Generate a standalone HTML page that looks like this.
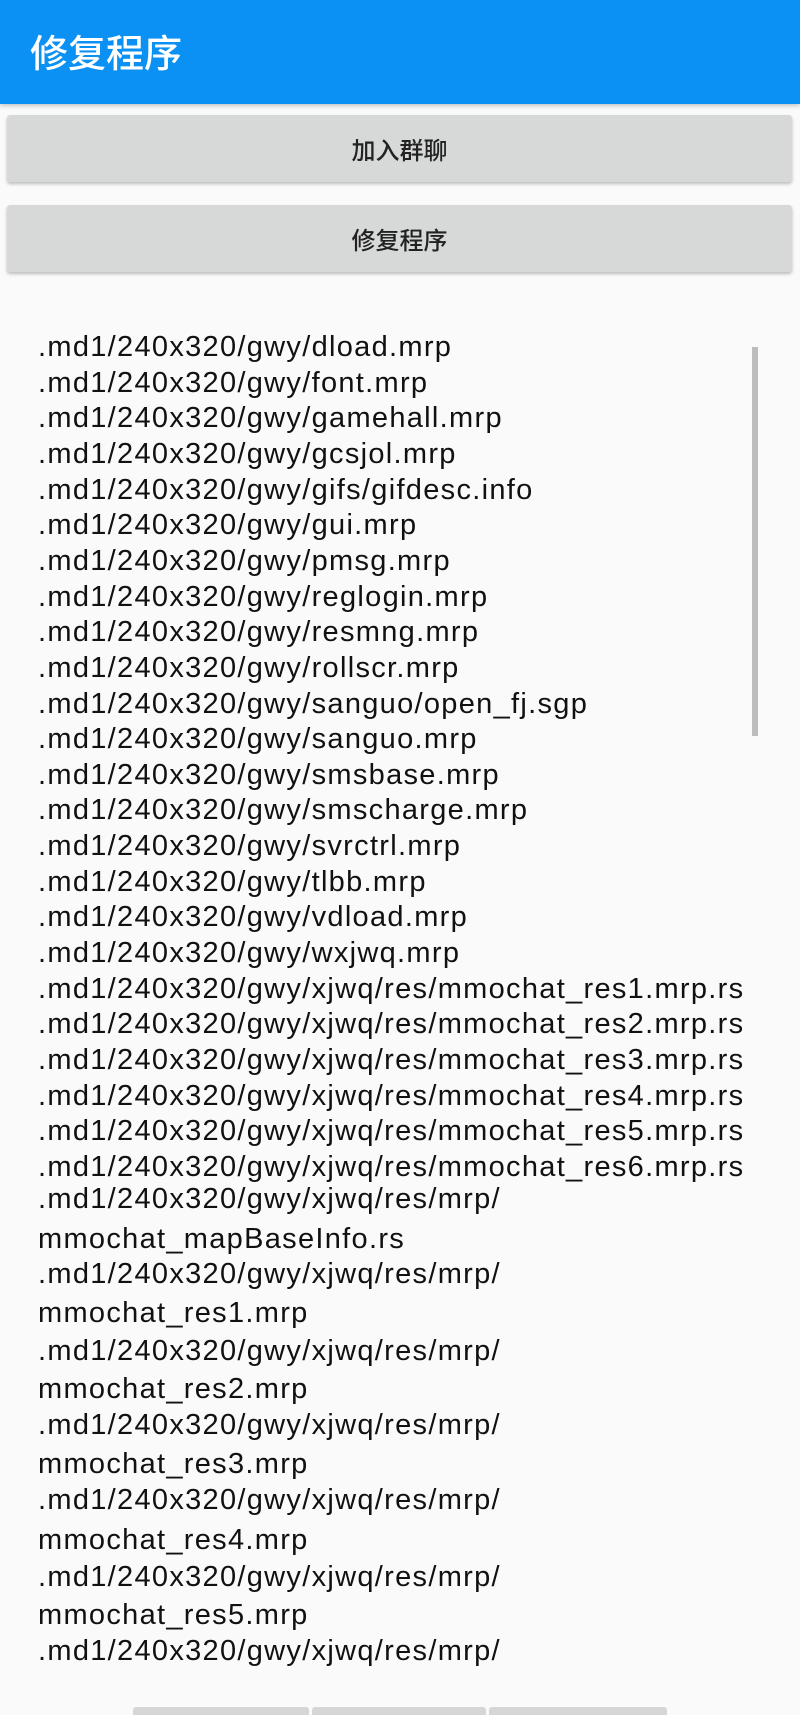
<!DOCTYPE html>
<html><head><meta charset="utf-8"><style>
body{margin:0;width:800px;height:1714px;background:#fafafa;position:relative;overflow:hidden;font-family:"Liberation Sans","Noto Sans CJK SC",sans-serif;}
.hdr{position:absolute;left:0;top:0;width:800px;height:104px;background:#0b91f3;box-shadow:0 2px 4px rgba(0,0,0,.2);}
.hdr span{position:absolute;left:30px;top:27px;font-size:38px;line-height:48px;color:#fff;font-weight:500;font-family:"Noto Sans CJK SC",sans-serif;}
.btn{position:absolute;left:7px;width:785px;height:67px;background:#d7d8d8;border-radius:3px;box-shadow:0 2px 3px rgba(0,0,0,.25);text-align:center;line-height:67px;font-size:24px;font-weight:500;color:#222;font-family:"Noto Sans CJK SC",sans-serif;}
.l{position:absolute;left:38px;font-size:29px;letter-spacing:1.3px;line-height:36px;color:#111;white-space:nowrap;}
.sb{position:absolute;left:752px;top:347px;width:6px;height:389px;background:#bdbdbd;}
.bar{position:absolute;top:1707px;height:8px;background:#d6d6d6;border-radius:3px 3px 0 0;}
</style></head><body>
<div class="hdr"><span>修复程序</span></div>
<div class="btn" style="top:115px">加入群聊</div>
<div class="btn" style="top:205px">修复程序</div>
<div class="sb"></div>
<div class="l" style="top:329px">.md1/240x320/gwy/dload.mrp</div>
<div class="l" style="top:365px">.md1/240x320/gwy/font.mrp</div>
<div class="l" style="top:400px">.md1/240x320/gwy/gamehall.mrp</div>
<div class="l" style="top:436px">.md1/240x320/gwy/gcsjol.mrp</div>
<div class="l" style="top:472px">.md1/240x320/gwy/gifs/gifdesc.info</div>
<div class="l" style="top:507px">.md1/240x320/gwy/gui.mrp</div>
<div class="l" style="top:543px">.md1/240x320/gwy/pmsg.mrp</div>
<div class="l" style="top:579px">.md1/240x320/gwy/reglogin.mrp</div>
<div class="l" style="top:614px">.md1/240x320/gwy/resmng.mrp</div>
<div class="l" style="top:650px">.md1/240x320/gwy/rollscr.mrp</div>
<div class="l" style="top:686px">.md1/240x320/gwy/sanguo/open_fj.sgp</div>
<div class="l" style="top:721px">.md1/240x320/gwy/sanguo.mrp</div>
<div class="l" style="top:757px">.md1/240x320/gwy/smsbase.mrp</div>
<div class="l" style="top:792px">.md1/240x320/gwy/smscharge.mrp</div>
<div class="l" style="top:828px">.md1/240x320/gwy/svrctrl.mrp</div>
<div class="l" style="top:864px">.md1/240x320/gwy/tlbb.mrp</div>
<div class="l" style="top:899px">.md1/240x320/gwy/vdload.mrp</div>
<div class="l" style="top:935px">.md1/240x320/gwy/wxjwq.mrp</div>
<div class="l" style="top:971px">.md1/240x320/gwy/xjwq/res/mmochat_res1.mrp.rs</div>
<div class="l" style="top:1006px">.md1/240x320/gwy/xjwq/res/mmochat_res2.mrp.rs</div>
<div class="l" style="top:1042px">.md1/240x320/gwy/xjwq/res/mmochat_res3.mrp.rs</div>
<div class="l" style="top:1078px">.md1/240x320/gwy/xjwq/res/mmochat_res4.mrp.rs</div>
<div class="l" style="top:1113px">.md1/240x320/gwy/xjwq/res/mmochat_res5.mrp.rs</div>
<div class="l" style="top:1149px">.md1/240x320/gwy/xjwq/res/mmochat_res6.mrp.rs</div>
<div class="l" style="top:1181px">.md1/240x320/gwy/xjwq/res/mrp/</div>
<div class="l" style="top:1221px">mmochat_mapBaseInfo.rs</div>
<div class="l" style="top:1256px">.md1/240x320/gwy/xjwq/res/mrp/</div>
<div class="l" style="top:1295px">mmochat_res1.mrp</div>
<div class="l" style="top:1333px">.md1/240x320/gwy/xjwq/res/mrp/</div>
<div class="l" style="top:1371px">mmochat_res2.mrp</div>
<div class="l" style="top:1407px">.md1/240x320/gwy/xjwq/res/mrp/</div>
<div class="l" style="top:1446px">mmochat_res3.mrp</div>
<div class="l" style="top:1482px">.md1/240x320/gwy/xjwq/res/mrp/</div>
<div class="l" style="top:1522px">mmochat_res4.mrp</div>
<div class="l" style="top:1559px">.md1/240x320/gwy/xjwq/res/mrp/</div>
<div class="l" style="top:1597px">mmochat_res5.mrp</div>
<div class="l" style="top:1633px">.md1/240x320/gwy/xjwq/res/mrp/</div>
<div class="bar" style="left:133px;width:176px"></div>
<div class="bar" style="left:312px;width:174px"></div>
<div class="bar" style="left:489px;width:178px"></div>
</body></html>
